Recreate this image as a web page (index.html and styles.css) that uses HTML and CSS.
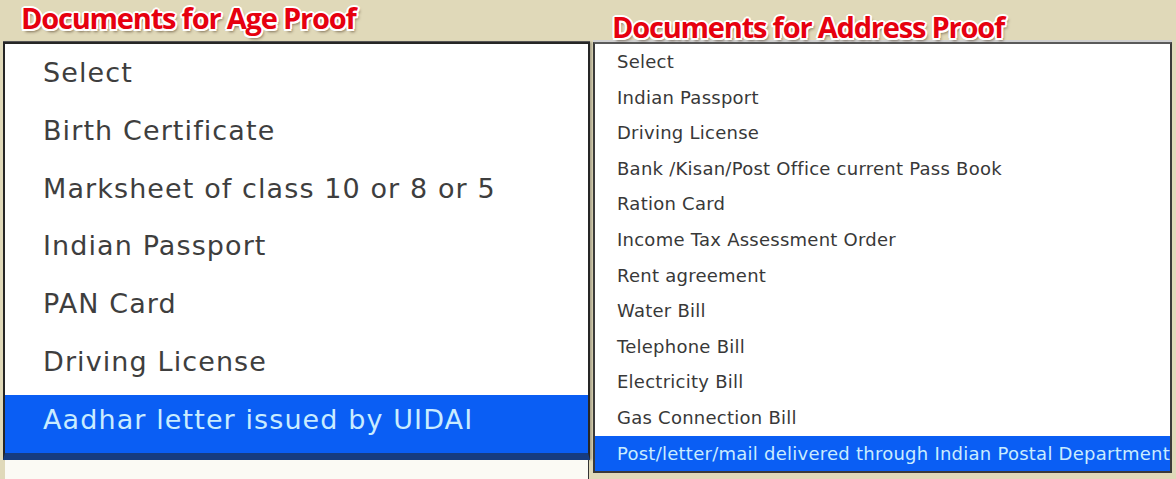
FILE: index.html
```html
<!DOCTYPE html>
<html lang="en">
<head>
<meta charset="utf-8">
<title>Documents for Age and Address Proof</title>
<link rel="stylesheet" href="styles.css">
</head>
<body>
<div class="page">
  <section class="col col-age">
    <h2 class="title title-age">Documents for Age Proof</h2>
    <ul class="list list-age">
      <li class="item">Select</li>
      <li class="item">Birth Certificate</li>
      <li class="item">Marksheet of class 10 or 8 or 5</li>
      <li class="item">Indian Passport</li>
      <li class="item">PAN Card</li>
      <li class="item">Driving License</li>
      <li class="item selected">Aadhar letter issued by UIDAI</li>
    </ul>
    <div class="under"></div>
  </section>
  <section class="col col-addr">
    <h2 class="title title-addr">Documents for Address Proof</h2>
    <ul class="list list-addr">
      <li class="item">Select</li>
      <li class="item">Indian Passport</li>
      <li class="item">Driving License</li>
      <li class="item">Bank /Kisan/Post Office current Pass Book</li>
      <li class="item">Ration Card</li>
      <li class="item">Income Tax Assessment Order</li>
      <li class="item">Rent agreement</li>
      <li class="item">Water Bill</li>
      <li class="item">Telephone Bill</li>
      <li class="item">Electricity Bill</li>
      <li class="item">Gas Connection Bill</li>
      <li class="item selected">Post/letter/mail delivered through Indian Postal Department</li>
    </ul>
  </section>
</div>
</body>
</html>
```

FILE: styles.css
```css
html, body {
  margin: 0;
  padding: 0;
}
body {
  background: #e0d9b9;
  width: 1176px;
  height: 479px;
  overflow: hidden;
  font-family: "DejaVu Sans", Verdana, sans-serif;
}
.page {
  display: flex;
  gap: 3px;
  padding-left: 3px;
  height: 479px;
}
.col {
  display: flex;
  flex-direction: column;
}
.col-age {
  width: 587px;
}
.col-addr {
  width: 579px;
}
.title {
  margin: 0;
  height: 42px;
  box-sizing: border-box;
  font-family: "Open Sans", "Noto Sans", sans-serif;
  font-weight: 700;
  font-size: 29px;
  line-height: 29px;
  letter-spacing: -1.2px;
  color: #e6000f;
  white-space: nowrap;
  position: relative;
  z-index: 2;
  text-shadow:
    2px 0 0 #fff, -2px 0 0 #fff, 0 2px 0 #fff, 0 -2px 0 #fff,
    1.5px 1.5px 0 #fff, -1.5px 1.5px 0 #fff, 1.5px -1.5px 0 #fff, -1.5px -1.5px 0 #fff,
    2px 3px 3px rgba(60, 40, 20, 0.6);
}
.title-age {
  padding: 3px 0 0 18px;
}
.title-addr {
  padding: 12px 0 0 19px;
}
.list {
  list-style: none;
  margin: 0;
  background: #fff;
  white-space: nowrap;
}
.list-age {
  border: 2px solid #262626;
  border-bottom: 7px solid #163c80;
  padding: 4px 0 0 0;
  font-size: 27px;
  letter-spacing: 1.1px;
  color: #3e3e3e;
  box-shadow: 0 -1px 0 #555, 2px 0 2px rgba(0,0,0,0.25);
}
.list-age .item {
  height: 57.8px;
  line-height: 50px;
  padding-left: 38px;
  box-sizing: border-box;
}
.list-addr {
  border: 2px solid #3a3a3a;
  border-top-color: #5a5a5a;
  padding: 0;
  font-size: 18px;
  letter-spacing: 0.25px;
  color: #383838;
  box-shadow: 0 -2px 0 #d0d0d0;
}
.list-addr .item {
  height: 35.6px;
  line-height: 35.6px;
  padding-left: 22px;
}
.item.selected {
  background: #0a5ef4;
  color: #c9ecff;
}
.under {
  flex: 1;
  margin: 0 1px 0 2px;
  background: #fbfaf4;
  border-right: 1px solid #333;
}
```
